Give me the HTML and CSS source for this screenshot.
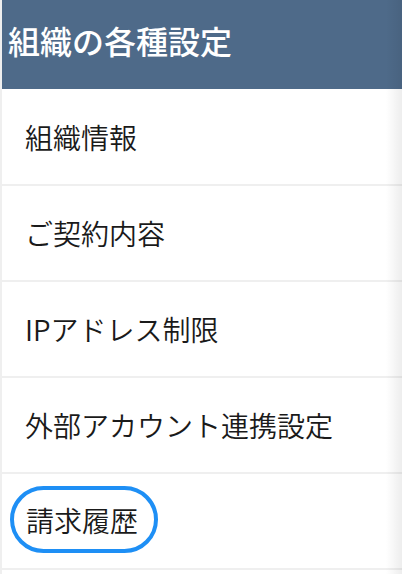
FILE: index.html
```html
<!DOCTYPE html>
<html lang="ja">
<head>
<meta charset="utf-8">
<link rel="stylesheet" href="styles.css">
</head>
<body>
<div class="panel">
  <div class="header">組織の各種設定</div>
  <ul class="menu">
    <li class="item">組織情報</li>
    <li class="item">ご契約内容</li>
    <li class="item">IPアドレス制限</li>
    <li class="item">外部アカウント連携設定</li>
    <li class="item"><span class="focus">請求履歴</span></li>
  </ul>
</div>
</body>
</html>
```
FILE: styles.css
```css
html, body {
  margin: 0;
  padding: 0;
}
body {
  background: #efefef;
  font-family: "Noto Sans CJK JP", "Noto Sans", sans-serif;
  width: 402px;
  height: 574px;
  overflow: hidden;
}
.panel {
  position: relative;
  margin-left: 2px;
  background: #ffffff;
  min-height: 574px;
}
.panel::after {
  content: "";
  position: absolute;
  top: 0;
  right: 0;
  bottom: 0;
  width: 16px;
  background: linear-gradient(to right, rgba(0,0,0,0), rgba(0,0,0,0.07));
  pointer-events: none;
}
.header {
  height: 89px;
  box-sizing: border-box;
  padding: 24px 0 0 6px;
  background: #4e6a89;
  color: #ffffff;
  font-size: 32px;
  line-height: 32px;
  font-weight: 500;
}
.menu {
  list-style: none;
  margin: 0;
  padding: 0;
}
.item {
  display: flex;
  align-items: center;
  height: 96px;
  box-sizing: border-box;
  padding-left: 23px;
  border-bottom: 2px solid #efefef;
  font-size: 28px;
  line-height: 28px;
  font-weight: 350;
  color: #1a1a1a;
}
.item:first-child {
  height: 97px;
}
.focus {
  display: inline-block;
  margin-left: -15px;
  margin-bottom: 4px;
  padding: 16px 16px 15px 12px;
  border: 4px solid #1e8ff5;
  border-radius: 40px;
}
```
